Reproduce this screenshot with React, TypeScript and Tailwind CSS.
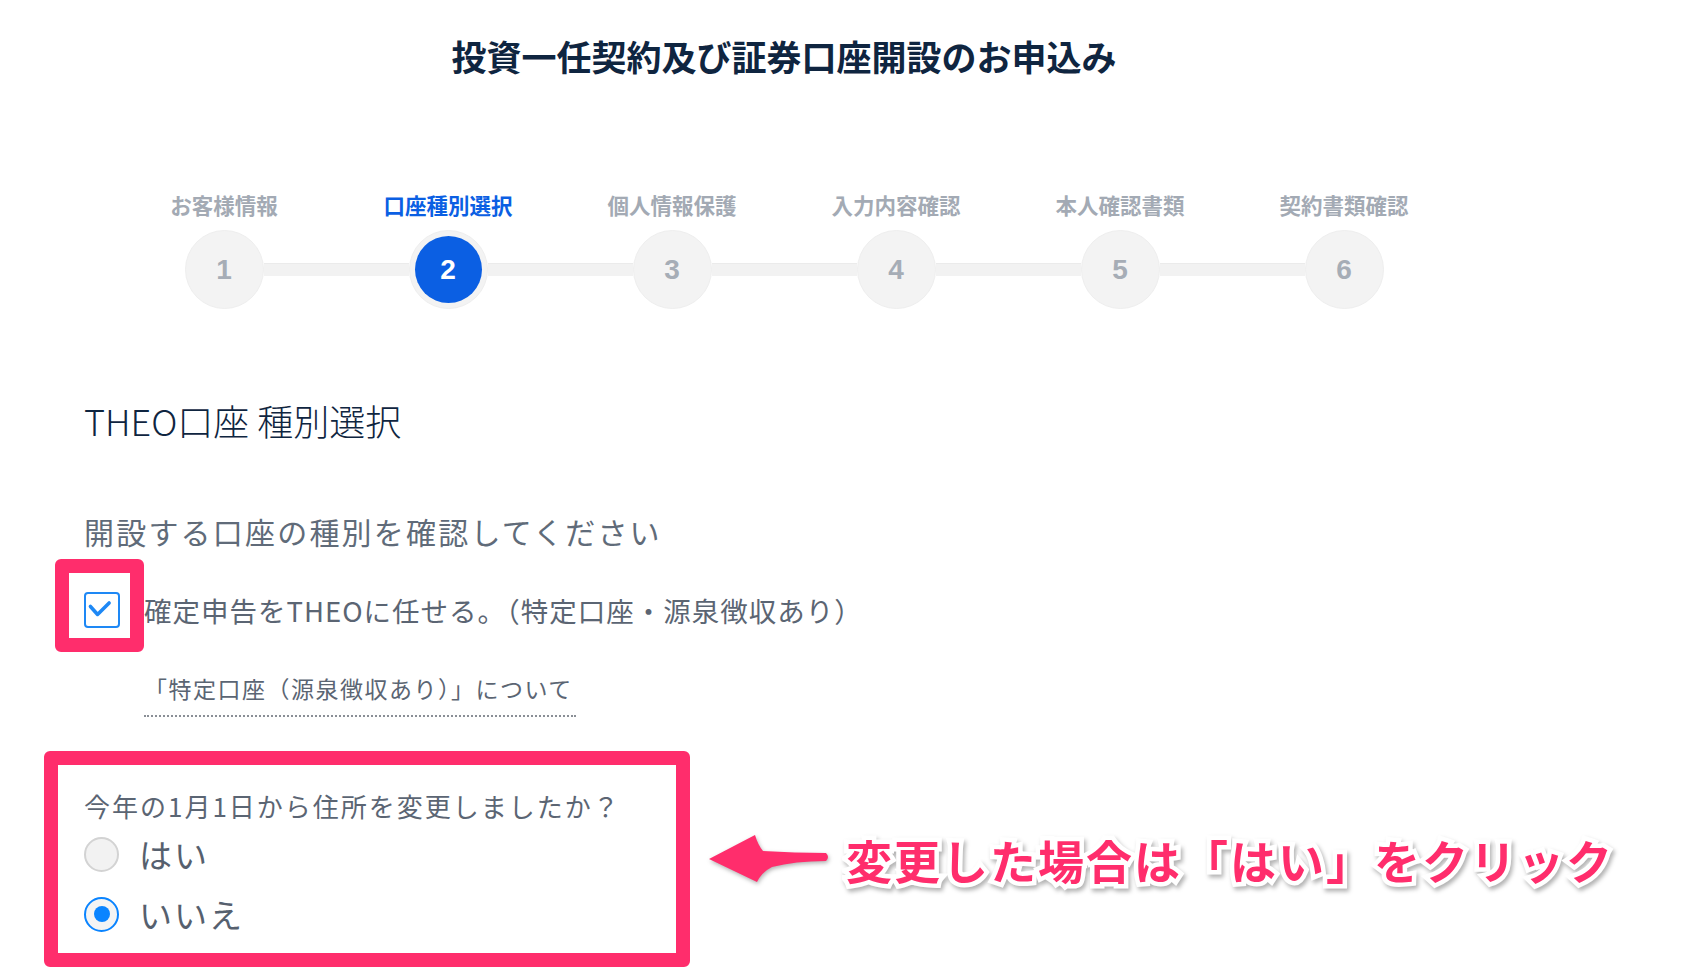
import React, { useState } from 'react';

const steps = ['お客様情報', '口座種別選択', '個人情報保護', '入力内容確認', '本人確認書類', '契約書類確認'];
const current = 2;

const Stepper: React.FC = () => (
  <div className="ml-[28px] w-[1344px] grid grid-cols-6 mt-[113px]">
    {steps.map((label, i) => {
      const n = i + 1;
      const active = n === current;
      return (
        <div key={label} className="flex flex-col items-center">
          <div
            className={`h-[28px] leading-[28px] text-[21.5px] font-bold ${
              active ? 'text-[#0b5fe3]' : 'text-[#a3aab4]'
            }`}
          >
            {label}
          </div>
          <div className="mt-[11px] w-full flex items-center">
            <div className={`flex-1 h-[13px] ${i === 0 ? '' : 'bg-[#f2f2f2] border-t border-[#ebebeb]'}`} />
            <div className="w-[79px] h-[79px] rounded-full bg-[#f3f3f3] border border-[#eeeeee] flex items-center justify-center">
              {active ? (
                <div className="w-[67px] h-[67px] rounded-full bg-[#0b5fe3] flex items-center justify-center text-white text-[28px] font-bold font-['Liberation_Sans',sans-serif]">
                  {n}
                </div>
              ) : (
                <span className="text-[#a6adb6] text-[28px] font-bold font-['Liberation_Sans',sans-serif]">{n}</span>
              )}
            </div>
            <div className={`flex-1 h-[13px] ${i === steps.length - 1 ? '' : 'bg-[#f2f2f2] border-t border-[#ebebeb]'}`} />
          </div>
        </div>
      );
    })}
  </div>
);

const Radio: React.FC<{ checked: boolean; label: string; onClick: () => void; className?: string }> = ({
  checked,
  label,
  onClick,
  className,
}) => (
  <button onClick={onClick} className={`flex items-center gap-[20px] h-[40px] ${className ?? ''}`}>
    {checked ? (
      <span className="w-[35px] h-[35px] rounded-full border-2 border-[#0a84ff] bg-[#f4f4f4] flex items-center justify-center">
        <span className="w-[16px] h-[16px] rounded-full bg-[#0a84ff]" />
      </span>
    ) : (
      <span className="w-[35px] h-[35px] rounded-full border-2 border-[#d3d3d3] bg-[#f2f2f2]" />
    )}
    <span className="text-[33px] leading-[40px] text-[#56606e] tracking-[2px]">{label}</span>
  </button>
);

export default function App() {
  const [moved, setMoved] = useState(false);
  const [delegate, setDelegate] = useState(true);

  return (
    <div className="relative w-[1690px] h-[980px] bg-white overflow-hidden font-['Noto_Sans_CJK_JP',sans-serif]">
      <div className="ml-[84px] w-[1400px]">
        <h1 className="pt-[34px] h-[78px] text-center text-[35px] leading-[44px] font-bold text-[#0f2540]">
          投資一任契約及び証券口座開設のお申込み
        </h1>

        <Stepper />

        <h2 className="mt-[89px] h-[44px] leading-[44px] text-[36px] font-light text-[#0f2540]">THEO口座 種別選択</h2>

        <p className="mt-[69px] h-[40px] leading-[40px] text-[30px] tracking-[2.2px] text-[#606b79]">
          開設する口座の種別を確認してください
        </p>

        <label className="mt-[41px] flex items-center gap-[24px] h-[36px] cursor-pointer" onClick={() => setDelegate(!delegate)}>
          <span className="w-[36px] h-[36px] rounded-[4px] border-2 border-[#1e88f5] bg-white flex items-center justify-center">
            {delegate && (
              <svg width="36" height="36" viewBox="0 0 36 36" fill="none">
                <path d="M5 14 L13 23 L26 10" stroke="#1e88f5" strokeWidth="4" strokeLinecap="round" strokeLinejoin="round" />
              </svg>
            )}
          </span>
          <span className="text-[27.5px] leading-[36px] tracking-[1px] text-[#5b6573]">
            確定申告をTHEOに任せる。（特定口座・源泉徴収あり）
          </span>
        </label>

        <div className="mt-[44px] ml-[60px] w-[432px] pb-[11px] border-b-2 border-dotted border-[#8a8f96]">
          <span className="block text-[23px] leading-[32px] tracking-[1.5px] text-[#5b6573]">「特定口座（源泉徴収あり）」について</span>
        </div>

        <p className="mt-[71px] h-[36px] leading-[36px] text-[26px] tracking-[2px] text-[#5b6573]">
          今年の1月1日から住所を変更しましたか？
        </p>
        <Radio className="mt-[10px]" checked={moved} label="はい" onClick={() => setMoved(true)} />
        <Radio className="mt-[20px]" checked={!moved} label="いいえ" onClick={() => setMoved(false)} />
      </div>

      {/* annotation frames */}
      <div className="absolute left-[55px] top-[559px] w-[89px] h-[93px] border-[14px] border-[#ff2d6c] rounded-[6px] pointer-events-none" />
      <div className="absolute left-[44px] top-[751px] w-[646px] h-[216px] border-[14px] border-[#ff2d6c] rounded-[6px] pointer-events-none" />

      {/* annotation arrow */}
      <svg
        className="absolute left-[700px] top-[820px] drop-shadow-[1px_2px_2px_rgba(0,0,0,0.3)]"
        width="160"
        height="80"
        viewBox="0 0 160 80"
      >
        <path
          d="M9 39 L55 15 Q58 25 63 31 Q95 33 126 33 Q130 37 126 41 Q95 41 72 47 Q62 52 57 62 Z"
          fill="#ff2d6c"
        />
      </svg>

      <div className="absolute left-[846px] top-[831px] h-[56px] leading-[56px] text-[46px] font-bold tracking-[2px] text-[#ff2d6c] [-webkit-text-stroke:9px_#ffffff] [paint-order:stroke_fill] drop-shadow-[2px_3px_2px_rgba(0,0,0,0.3)]">
        変更した場合は「はい」をクリック
      </div>
    </div>
  );
}
